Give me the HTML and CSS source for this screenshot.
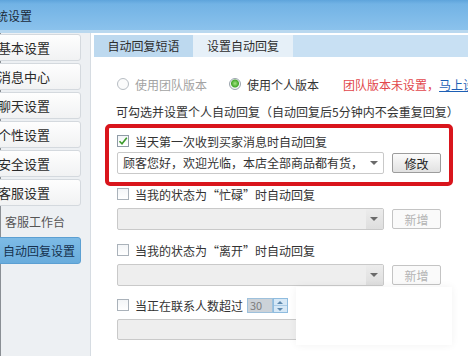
FILE: index.html
```html
<!DOCTYPE html>
<html lang="zh-CN">
<head>
    <meta charset="UTF-8">
    <meta name="viewport" content="width=device-width, initial-scale=1.0">
    <title>系统设置</title>
    <link rel="stylesheet" href="styles.css">
</head>
<body>

<div class="window">
    <div class="titlebar"><span class="title">系统设置</span></div>

    <div class="main">
        <ul class="nav">
            <li class="nav-item">基本设置</li>
            <li class="nav-item">消息中心</li>
            <li class="nav-item">聊天设置</li>
            <li class="nav-item">个性设置</li>
            <li class="nav-item">安全设置</li>
            <li class="nav-item">客服设置</li>
            <li class="nav-sub">客服工作台</li>
            <li class="nav-sub active">自动回复设置</li>
        </ul>

        <div class="panel">
            <div class="tabs">
                <span class="tab">自动回复短语</span>
                <span class="tab current">设置自动回复</span>
            </div>

            <div class="content">
                <div class="mode-row">
                    <label class="radio off"><i class="dot"></i>使用团队版本</label>
                    <label class="radio on"><i class="dot"></i>使用个人版本</label>
                    <span class="warn">团队版本未设置，<a href="#">马上设置</a></span>
                </div>

                <p class="hint">可勾选并设置个人自动回复（自动回复后5分钟内不会重复回复）</p>

                <div class="rule highlight">
                    <label class="check-row">
                        <i class="box checked">
                            <svg width="10" height="10" viewBox="0 0 10 10"><path d="M1.5 5.2 L4 7.8 L8.8 1.8" fill="none" stroke="#3a9a2a" stroke-width="1.6"/></svg>
                        </i>当天第一次收到买家消息时自动回复
                    </label>
                    <div class="select-row">
                        <div class="select"><span>顾客您好，欢迎光临，本店全部商品都有货，</span><i class="arrow"></i></div>
                        <button class="btn">修改</button>
                    </div>
                </div>

                <div class="rule">
                    <label class="check-row"><i class="box"></i>当我的状态为“忙碌”时自动回复</label>
                    <div class="select-row">
                        <div class="select disabled"><span></span><i class="arrow"></i></div>
                        <button class="btn disabled">新增</button>
                    </div>
                </div>

                <div class="rule">
                    <label class="check-row"><i class="box"></i>当我的状态为“离开”时自动回复</label>
                    <div class="select-row">
                        <div class="select disabled"><span></span><i class="arrow"></i></div>
                        <button class="btn disabled">新增</button>
                    </div>
                </div>

                <div class="rule last">
                    <label class="check-row"><i class="box"></i>当正在联系人数超过
                        <span class="spin">
                            <span class="spin-input">30</span>
                            <span class="spin-btns"><i class="up"></i><i class="down"></i></span>
                        </span>
                        <span class="paren">（</span>
                    </label>
                    <div class="select-row">
                        <div class="select disabled short"><span></span></div>
                    </div>
                </div>
            </div>
        </div>
    </div>

    <div class="overlay"></div>
</div>

</body>
</html>
```

FILE: styles.css
```css
body {
    margin: 0;
    font-family: "Noto Sans CJK SC", "Microsoft YaHei", sans-serif;
    font-size: 12px;
    color: #333;
    background: #fff;
}
.window {
    position: relative;
    width: 468px;
    height: 356px;
    overflow: hidden;
}
.titlebar {
    height: 30px;
    background: linear-gradient(#5ea4db 0, #72b3e5 4px, #8bc2ec 100%);
    border-bottom: 3px solid #b9d8ef;
}
.title {
    display: inline-block;
    margin-left: -16px;
    font-size: 12px;
    line-height: 32px;
    color: #1b2a3a;
}
.main {
    display: flex;
    height: 323px;
}

/* left menu */
.nav {
    list-style: none;
    margin: 0;
    padding: 1px 0 0 0;
    width: 91px;
    box-sizing: border-box;
    background: #edf0f3;
    border-right: 1px solid #d6dce2;
    border-left: 1px solid #8a8f94;
}
.nav li {
    width: 87px;
    height: 27px;
    box-sizing: border-box;
    margin: 0 0 2px -7px;
    line-height: 25px;
    white-space: nowrap;
    border: 1px solid transparent;
    border-radius: 3px;
}
.nav-item {
    padding-left: 3px;
    font-size: 13px;
    color: #2a2a2a;
    background: linear-gradient(#fefefe, #f1f2f3);
    border-color: #d4d9de !important;
}
.nav-sub {
    padding-left: 10px;
    color: #555;
}
.nav-sub.active {
    padding-left: 8px;
    color: #15314e;
    background: linear-gradient(#7dbbe6, #69acdc);
    border-color: #5b9fd2 !important;
}

/* right panel */
.panel {
    flex: 1;
    background: #fff;
}
.tabs {
    display: flex;
    height: 22px;
    margin: 2px 0 0 3px;
    background: #c8e0f3;
}
.tab {
    width: 99px;
    line-height: 22px;
    text-align: center;
    background: #bdd9ef;
    color: #2d2d2d;
}
.tab.current {
    width: 100px;
    background: #e6f0f8;
}
.content {
    width: 324px;
    margin-left: 26px;
    padding-top: 19px;
}
.mode-row {
    display: flex;
    align-items: center;
    height: 16px;
    white-space: nowrap;
}
.radio {
    display: flex;
    align-items: center;
}
.radio .dot {
    width: 12px;
    height: 12px;
    box-sizing: border-box;
    margin-right: 6px;
    border-radius: 50%;
    border: 1px solid #b7bdc3;
    background: #fbfbfb;
}
.radio.off {
    color: #a3a3a3;
    margin-right: 22px;
}
.radio.on {
    margin-right: 24px;
}
.radio.on .dot {
    border-color: #9aa4ad;
    background: radial-gradient(circle at 50% 45%, #a6e584 0, #44a82c 3.5px, #f4f6f7 4.5px);
}
.warn {
    color: #e2474c;
}
.warn a {
    color: #1d5fb5;
    text-decoration: underline;
}
.hint {
    margin: 12px 0 0 -1px;
    height: 16px;
    line-height: 16px;
    white-space: nowrap;
}

/* auto reply rules */
.rule {
    margin-top: 12px;
}
.rule.highlight {
    margin: 4px -12px 0 -12px;
    padding: 5px 8px 8px 8px;
    border: 4px solid #d9151c;
    border-radius: 5px;
}
.highlight + .rule {
    margin-top: 0;
}
.rule.last {
    margin-top: 11px;
}
.check-row {
    display: flex;
    align-items: center;
    height: 16px;
    white-space: nowrap;
}
.box {
    display: flex;
    align-items: center;
    justify-content: center;
    width: 12px;
    height: 12px;
    box-sizing: border-box;
    margin-right: 6px;
    border: 1px solid #aab2ba;
    background: linear-gradient(#f3f5f7, #fff);
}
.box.checked {
    border-color: #8f9ba6;
}
.select-row {
    display: flex;
    align-items: center;
    margin-top: 6px;
}
.highlight .select-row {
    margin-top: 3px;
}
.select {
    position: relative;
    width: 267px;
    height: 22px;
    box-sizing: border-box;
    padding-left: 5px;
    line-height: 20px;
    border: 1px solid #c9c9c9;
    border-radius: 2px;
    background: #fff;
    white-space: nowrap;
}
.select .arrow {
    position: absolute;
    right: 0;
    top: 0;
    width: 17px;
    height: 20px;
}
.select .arrow::after {
    content: "";
    position: absolute;
    left: 4px;
    top: 8px;
    border-left: 4px solid transparent;
    border-right: 4px solid transparent;
    border-top: 4px solid #6a6a6a;
}
.select.disabled {
    background: #eeeeee;
}
.select.disabled .arrow {
    background: linear-gradient(#ececec, #dedede);
}
.select.short {
    height: 21px;
}
.btn {
    width: 49px;
    height: 20px;
    margin-left: 8px;
    padding: 0;
    font-family: inherit;
    font-size: 12px;
    color: #222;
    border: 1px solid #9c9c9c;
    border-radius: 2px;
    background: linear-gradient(#fbfbfb, #e1e1e1);
}
.btn.disabled {
    color: #b4b4b4;
    border-color: #c4c4c4;
    background: #fafafa;
}
.spin {
    display: flex;
    height: 15px;
    margin-left: 4px;
}
.spin-input {
    width: 26px;
    box-sizing: border-box;
    padding-left: 2px;
    line-height: 13px;
    font-size: 11px;
    color: #7d7d7d;
    background: #ccd2d8;
    border: 1px solid #9ec1dc;
}
.spin-btns {
    display: flex;
    flex-direction: column;
    width: 15px;
    box-sizing: border-box;
    border: 1px solid #8fbcdf;
    background: #d6e8f6;
}
.spin-btns i {
    flex: 1;
    position: relative;
}
.spin-btns .up::after,
.spin-btns .down::after {
    content: "";
    position: absolute;
    left: 3px;
    border-left: 3px solid transparent;
    border-right: 3px solid transparent;
}
.spin-btns .up::after {
    top: 2px;
    border-bottom: 3px solid #5d88ad;
}
.spin-btns .down::after {
    top: 2px;
    border-top: 3px solid #5d88ad;
}
.spin-btns .up {
    border-bottom: 1px solid #a9cbe6;
}
.paren {
    margin-left: 3px;
    color: #888;
}
.overlay {
    position: absolute;
    left: 296px;
    top: 287px;
    width: 156px;
    height: 58px;
    background: #fff;
    box-shadow: 0 0 8px rgba(0, 0, 0, 0.06);
}
```
